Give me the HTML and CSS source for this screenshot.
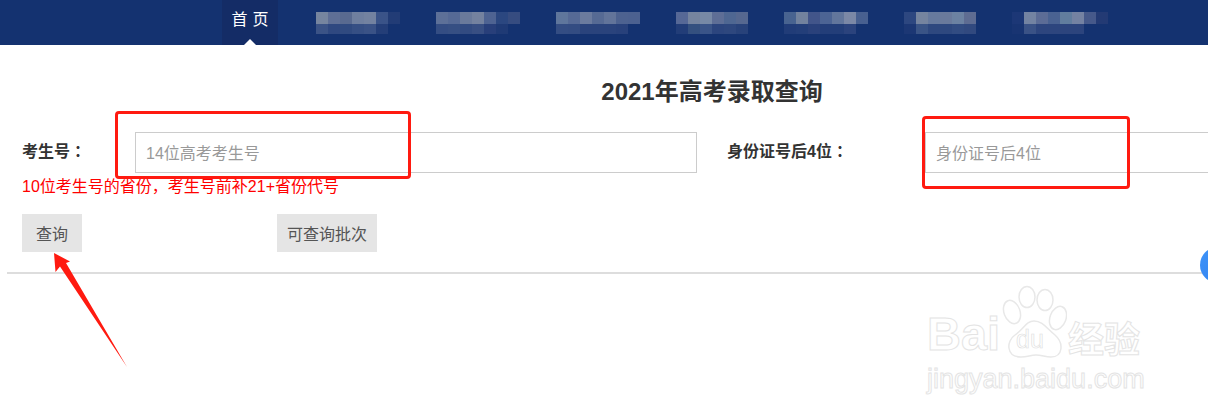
FILE: index.html
```html
<!DOCTYPE html>
<html lang="zh-CN">
<head>
    <meta charset="UTF-8">
    <title>2021年高考录取查询</title>
    <link rel="stylesheet" href="styles.css">
</head>
<body>
    <header class="top-bar">
        <nav class="nav">
            <a class="nav-home">首页</a>
            <svg class="nav-blur" width="84" height="22">
                <rect width="12" height="12" fill="#76859f"/><rect x="12" width="12" height="12" fill="#5f6f96"/><rect x="24" width="12" height="12" fill="#596a90"/><rect x="36" width="12" height="12" fill="#6f7f9f"/><rect x="48" width="12" height="12" fill="#7382a0"/><rect x="60" width="12" height="12" fill="#3a5388"/><rect x="72" width="12" height="12" fill="#223c76"/>
                <rect y="12" width="12" height="10" fill="#3b5386"/><rect x="12" y="12" width="12" height="10" fill="#2f4880"/><rect x="24" y="12" width="12" height="10" fill="#304a80"/><rect x="36" y="12" width="12" height="10" fill="#364f84"/><rect x="48" y="12" width="12" height="10" fill="#3a5286"/><rect x="60" y="12" width="12" height="10" fill="#243e78"/>
            </svg>
            <svg class="nav-blur" width="84" height="22">
                <rect width="12" height="12" fill="#5d7098"/><rect x="12" width="12" height="12" fill="#566a96"/><rect x="24" width="12" height="12" fill="#6a7a9b"/><rect x="36" width="12" height="12" fill="#74829f"/><rect x="48" width="12" height="12" fill="#4e6392"/><rect x="60" width="12" height="12" fill="#2b4780"/><rect x="72" width="12" height="12" fill="#364c80"/>
                <rect y="12" width="12" height="10" fill="#344d83"/><rect x="12" y="12" width="12" height="10" fill="#364f83"/><rect x="24" y="12" width="12" height="10" fill="#324b81"/><rect x="36" y="12" width="12" height="10" fill="#384f83"/><rect x="48" y="12" width="12" height="10" fill="#283f7a"/><rect x="60" y="12" width="12" height="10" fill="#1f3a75"/>
            </svg>
            <svg class="nav-blur" width="84" height="22">
                <rect width="12" height="12" fill="#5f769c"/><rect x="12" width="12" height="12" fill="#566a96"/><rect x="24" width="12" height="12" fill="#6b7b9e"/><rect x="36" width="12" height="12" fill="#566a94"/><rect x="48" width="12" height="12" fill="#62749a"/><rect x="60" width="12" height="12" fill="#4d6290"/><rect x="72" width="12" height="12" fill="#4c6190"/>
                <rect y="12" width="12" height="10" fill="#344d83"/><rect x="12" y="12" width="12" height="10" fill="#334c82"/><rect x="24" y="12" width="12" height="10" fill="#2a437c"/><rect x="36" y="12" width="12" height="10" fill="#2a437c"/><rect x="48" y="12" width="12" height="10" fill="#2a437c"/><rect x="60" y="12" width="12" height="10" fill="#28417b"/>
            </svg>
            <svg class="nav-blur" width="72" height="22">
                <rect width="12" height="12" fill="#566896"/><rect x="12" width="12" height="12" fill="#75849f"/><rect x="24" width="12" height="12" fill="#7789a6"/><rect x="36" width="12" height="12" fill="#5e6e96"/><rect x="48" width="12" height="12" fill="#4f6792"/><rect x="60" width="12" height="12" fill="#566890"/>
                <rect y="12" width="12" height="10" fill="#223d78"/><rect x="12" y="12" width="12" height="10" fill="#34507f"/><rect x="24" y="12" width="12" height="10" fill="#3a5488"/><rect x="36" y="12" width="12" height="10" fill="#2c457e"/><rect x="48" y="12" width="12" height="10" fill="#2e477e"/><rect x="60" y="12" width="12" height="10" fill="#28427a"/>
            </svg>
            <svg class="nav-blur" width="84" height="22">
                <rect width="12" height="12" fill="#486390"/><rect x="12" width="12" height="12" fill="#72829e"/><rect x="24" width="12" height="12" fill="#42558a"/><rect x="36" width="12" height="12" fill="#4c6494"/><rect x="48" width="12" height="12" fill="#62769c"/><rect x="60" width="12" height="12" fill="#7b88a6"/><rect x="72" width="12" height="12" fill="#486090"/>
                <rect y="12" width="12" height="10" fill="#213c78"/><rect x="12" y="12" width="12" height="10" fill="#233e79"/><rect x="24" y="12" width="12" height="10" fill="#2a417b"/><rect x="36" y="12" width="12" height="10" fill="#233e79"/><rect x="48" y="12" width="12" height="10" fill="#233e79"/><rect x="60" y="12" width="12" height="10" fill="#2b437d"/>
            </svg>
            <svg class="nav-blur" width="72" height="22">
                <rect width="12" height="12" fill="#2d4780"/><rect x="12" width="12" height="12" fill="#75849f"/><rect x="24" width="12" height="12" fill="#677a9e"/><rect x="36" width="12" height="12" fill="#6a7a9c"/><rect x="48" width="12" height="12" fill="#6c82a2"/><rect x="60" width="12" height="12" fill="#5e6c92"/>
                <rect y="12" width="12" height="10" fill="#1c3774"/><rect x="12" y="12" width="12" height="10" fill="#3a5486"/><rect x="24" y="12" width="12" height="10" fill="#2e487f"/><rect x="36" y="12" width="12" height="10" fill="#2e487f"/><rect x="48" y="12" width="12" height="10" fill="#324c82"/><rect x="60" y="12" width="12" height="10" fill="#31497f"/>
            </svg>
            <svg class="nav-blur" width="96" height="22">
                <rect width="12" height="12" fill="#1c3776"/><rect x="12" width="12" height="12" fill="#7383a2"/><rect x="24" width="12" height="12" fill="#5c6c96"/><rect x="36" width="12" height="12" fill="#4a6292"/><rect x="48" width="12" height="12" fill="#617d9e"/><rect x="60" width="12" height="12" fill="#7482a2"/><rect x="72" width="12" height="12" fill="#46598a"/><rect x="84" width="12" height="12" fill="#233a74"/>
                <rect y="12" width="12" height="10" fill="#183472"/><rect x="12" y="12" width="12" height="10" fill="#3a5286"/><rect x="24" y="12" width="12" height="10" fill="#2d457e"/><rect x="36" y="12" width="12" height="10" fill="#2d457e"/><rect x="48" y="12" width="12" height="10" fill="#2c447d"/><rect x="60" y="12" width="12" height="10" fill="#2c447d"/>
            </svg>
        </nav>
    </header>

    <main class="query-panel">
        <h1 class="query-title">2021年高考录取查询</h1>

        <form class="query-form">
            <div class="form-row">
                <label class="form-label label-exam" for="examNo">考生号<span class="punct">：</span></label>
                <input class="form-input" type="text" id="examNo" placeholder="14位高考考生号">
                <label class="form-label label-id" for="idNo">身份证号后4位<span class="punct">：</span></label>
                <input class="form-input" type="text" id="idNo" placeholder="身份证号后4位">
            </div>
            <p class="form-hint">10位考生号的省份<span class="punct-hint">，</span>考生号前补21+省份代号</p>
            <div class="form-actions">
                <button class="btn btn-query" type="button">查询</button>
                <button class="btn btn-batch" type="button">可查询批次</button>
            </div>
        </form>
        <div class="divider"></div>
    </main>

    <!-- anotaciones encima de la captura -->
    <div class="mark mark-exam"></div>
    <div class="mark mark-id"></div>
    <svg class="arrow" width="90" height="120" viewBox="0 0 90 120">
        <path d="M14 1 L30 9.500 L26 11 L87 115 L20 14.500 L15.500 20 Z" fill="#ff1a10"/>
    </svg>
    <div class="float-ball"></div>

    <div class="watermark">
        <span class="wm-bai">Bai</span>
        <svg class="wm-paw" width="66" height="74" viewBox="0 0 66 74">
            <g fill="#fff" stroke="#e8e8e8" stroke-width="1.500">
                <ellipse cx="11" cy="27" rx="8" ry="12" transform="rotate(-20 11 27)"/>
                <ellipse cx="26" cy="12" rx="8" ry="10.500"/>
                <ellipse cx="44" cy="15" rx="8" ry="10.500"/>
                <ellipse cx="57" cy="33" rx="8" ry="12" transform="rotate(20 57 33)"/>
                <path d="M33 36 C25 36 23 44 14 50 C5 56 5 72 20 72 C27 72 29 70 35 70 C41 70 44 72 50 72 C62 72 63 58 54 50 C46 44 42 36 33 36 Z"/>
            </g>
        </svg>
        <span class="wm-du">du</span>
        <span class="wm-cn">经验</span>
        <span class="wm-url">jingyan.baidu.com</span>
    </div>
</body>
</html>
```

FILE: styles.css
```css
html, body {
    margin: 0;
    height: 417px;
    overflow: hidden;
}

body {
    position: relative;
    width: 1208px;
    background-color: #fff;
    font-family: "Liberation Sans", "Noto Sans CJK SC", sans-serif;
    font-size: 16px;
    color: #333;
}

.punct {
    margin-left: 4px;
    font-family: "Noto Sans CJK TC", sans-serif;
}

.punct-hint {
    font-family: "Noto Sans CJK TC", sans-serif;
}

.top-bar {
    height: 45px;
    background-color: #143270;
}

.nav {
    display: flex;
    gap: 36px;
    padding-left: 222px;
    height: 45px;
}

.nav-home {
    position: relative;
    width: 56px;
    margin-right: 2px;
    background-color: #142c66;
    color: #fff;
    font-size: 16px;
    letter-spacing: 5px;
    line-height: 40px;
    text-align: center;
    text-indent: 5px;
}

.nav-home::after {
    content: "";
    position: absolute;
    left: 22px;
    bottom: 0;
    border-left: 6px solid transparent;
    border-right: 6px solid transparent;
    border-bottom: 6px solid #fff;
}

.nav-blur {
    display: block;
    margin-top: 12px;
}

.query-panel {
    width: 1410px;
    margin-left: 7px;
}

.query-title {
    margin: 30px 0 23px;
    font-size: 24px;
    font-weight: 600;
    line-height: 34px;
    text-align: center;
    color: #333;
}

.query-form {
    padding-left: 15px;
}

.form-row {
    display: flex;
    width: 1480px;
}

.form-label {
    flex: none;
    font-size: 16px;
    font-weight: 700;
    line-height: 36px;
}

.label-exam {
    width: 113px;
}

.label-id {
    width: 198px;
    margin-left: 30px;
}

.form-input {
    flex: none;
    box-sizing: border-box;
    width: 562px;
    height: 41px;
    padding: 2px 10px 0;
    border: 1px solid #ccc;
    font-family: inherit;
    font-size: 16px;
    outline: none;
}

.form-input::placeholder {
    color: #999;
}

.form-hint {
    height: 20px;
    margin: 2px 0 0;
    color: #f00;
    font-size: 16px;
    line-height: 20px;
}

.form-actions {
    display: flex;
    gap: 195px;
    margin-top: 19px;
}

.btn {
    height: 38px;
    padding: 0;
    border: none;
    background-color: #e5e5e5;
    color: #555;
    font-family: inherit;
    font-size: 16px;
}

.btn-query {
    width: 60px;
}

.btn-batch {
    width: 100px;
}

.divider {
    height: 2px;
    margin-top: 20px;
    background-color: #ddd;
}

.mark {
    position: absolute;
    box-sizing: border-box;
    border: 3px solid #ff1a10;
    border-radius: 4px;
}

.mark-exam {
    left: 115px;
    top: 111px;
    width: 296px;
    height: 68px;
}

.mark-id {
    left: 922px;
    top: 116px;
    width: 208px;
    height: 73px;
}

.arrow {
    position: absolute;
    left: 40px;
    top: 252px;
}

.float-ball {
    position: absolute;
    left: 1200px;
    top: 247px;
    width: 36px;
    height: 36px;
    border-radius: 50%;
    background: linear-gradient(135deg, #3f94f8, #2f7ff0);
}

.watermark {
    position: absolute;
    left: 925px;
    top: 285px;
    width: 240px;
    height: 110px;
}

.wm-bai, .wm-du, .wm-cn, .wm-url {
    position: absolute;
    color: #fff;
    -webkit-text-stroke: 1px #e4e4e4;
    white-space: nowrap;
    font-family: "Liberation Sans", sans-serif;
}

.wm-bai {
    left: 2px;
    top: 24px;
    font-size: 47px;
    line-height: 50px;
    font-weight: 700;
}

.wm-paw {
    position: absolute;
    left: 76px;
    top: 0;
}

.wm-du {
    left: 91px;
    top: 41px;
    font-size: 25px;
    line-height: 26px;
    -webkit-text-stroke: 0.6px #dcdcdc;
}

.wm-cn {
    left: 143px;
    top: 32px;
    font-family: "Noto Sans CJK SC", sans-serif;
    font-size: 36px;
    line-height: 40px;
    font-weight: 700;
}

.wm-url {
    left: 2px;
    top: 77px;
    font-size: 27px;
    line-height: 34px;
}
```
